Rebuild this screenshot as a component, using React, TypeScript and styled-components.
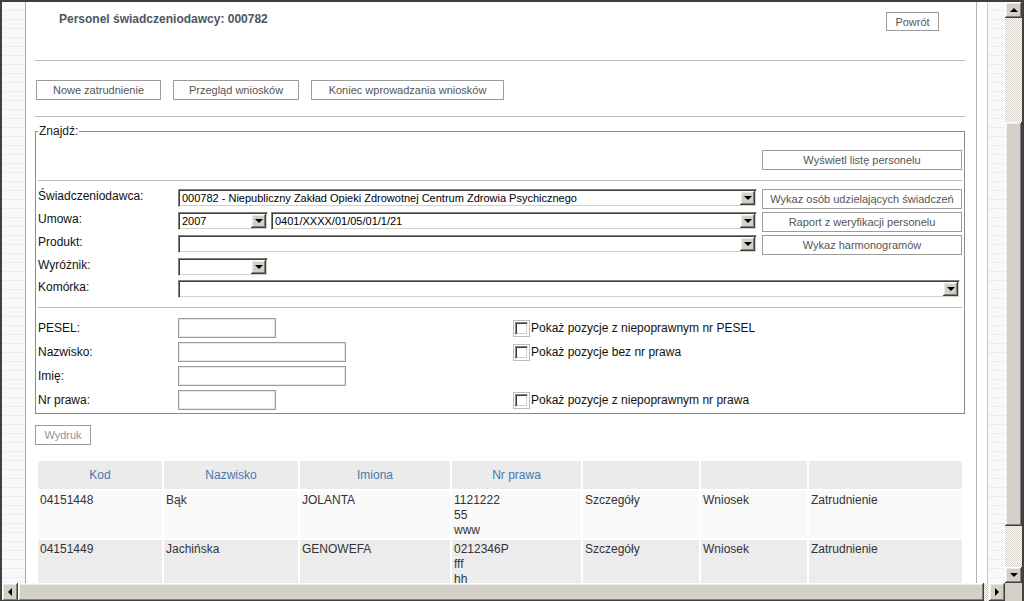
import styled, { createGlobalStyle, css } from "styled-components";

const GlobalStyle = createGlobalStyle`
  html, body {
    margin: 0;
    padding: 0;
    background: #fff;
    overflow: hidden;
  }
  body {
    font-family: "Liberation Sans", Arial, sans-serif;
    font-size: 12px;
    color: #222;
  }
  * {
    box-sizing: border-box;
  }
`;

const raised = css`
  background: #d4d0c8;
  box-shadow: inset -1px -1px 0 #404040, inset 1px 1px 0 #ffffff,
    inset -2px -2px 0 #808080, inset 2px 2px 0 #ecebe6;
`;

const checker = css`
  background-color: #ffffff;
  background-image: conic-gradient(#d4d0c8 25%, #ffffff 0 50%, #d4d0c8 0 75%, #ffffff 0);
  background-size: 2px 2px;
`;

const stripes = css`
  background: repeating-linear-gradient(to bottom, #f9f9fb 0 8px, #ececf1 8px 9px);
`;

const Frame = styled.div`
  width: 1024px;
  height: 601px;
  border-top: 2px solid #404040;
  border-left: 2px solid #404040;
  border-right: 2px solid #404040;
  display: flex;
  flex-direction: column;
  overflow: hidden;
`;

const Main = styled.div`
  display: flex;
  height: 581px;
`;

const LeftGutter = styled.div`
  width: 24px;
  border-right: 1px solid #a9a9a9;
  ${stripes};
`;

const Content = styled.div`
  width: 950px;
  padding: 10px 11px 0 9px;
  overflow: hidden;
  background: #fff;
`;

const RightGutter = styled.div`
  width: 29px;
  display: flex;
  border-left: 1px solid #b4b4b4;
`;

const GutterWhite = styled.div`
  width: 11px;
  border-right: 1px solid #c8c8c8;
  background: #fff;
`;

const GutterStripes = styled.div`
  flex: 1;
  ${stripes};
`;

const VScroll = styled.div`
  width: 17px;
  display: flex;
  flex-direction: column;
`;

const HScroll = styled.div`
  height: 18px;
  display: flex;
`;

const ScrollBtn = styled.div`
  width: 16px;
  height: 16px;
  flex: none;
  display: flex;
  align-items: center;
  justify-content: center;
  ${raised};
`;

const VScrollBtn = styled(ScrollBtn)`
  width: 17px;
`;

const HScrollBtn = styled(ScrollBtn)`
  height: 18px;
`;

const Track = styled.div<{ $size: number }>`
  flex: none;
  ${checker};
  ${({ $size }) => `flex-basis: ${$size}px;`}
`;

const Thumb = styled.div<{ $size: number }>`
  flex: none;
  ${raised};
  ${({ $size }) => `flex-basis: ${$size}px;`}
`;

const Corner = styled.div`
  width: 17px;
  background: #d4d0c8;
`;

type Dir = "up" | "down" | "left" | "right";

const Arrow = styled.span<{ $dir: Dir }>`
  width: 0;
  height: 0;
  border-style: solid;
  border-color: transparent;
  ${({ $dir }) =>
    $dir === "up"
      ? "border-width: 0 4px 4px 4px; border-bottom-color: #000;"
      : $dir === "down"
      ? "border-width: 4px 4px 0 4px; border-top-color: #000;"
      : $dir === "left"
      ? "border-width: 4px 4px 4px 0; border-right-color: #000;"
      : "border-width: 4px 0 4px 4px; border-left-color: #000;"}
`;

const Header = styled.div`
  display: flex;
  justify-content: space-between;
  align-items: flex-start;
  height: 19px;
  padding: 0 26px 0 24px;
`;

const Title = styled.h1`
  margin: 0;
  font-size: 12px;
  line-height: 14px;
  font-weight: bold;
  color: #4e5562;
`;

const Btn = styled.button<{ $w: number; $h?: number; $muted?: boolean }>`
  width: ${({ $w }) => $w}px;
  height: ${({ $h }) => $h ?? 20}px;
  flex: none;
  padding: 0;
  border: 1px solid #9c9c9c;
  background: #fff;
  color: ${({ $muted }) => ($muted ? "#939393" : "#555")};
  font: 11px "Liberation Sans", Arial, sans-serif;
  white-space: nowrap;
`;

const Rule = styled.div<{ $mt: number }>`
  height: 1px;
  margin-top: ${({ $mt }) => $mt}px;
  background: #bdbdbd;
`;

const ButtonBar = styled.div`
  display: flex;
  gap: 12px;
  margin-top: 19px;
  padding-left: 1px;
`;

const Fieldset = styled.fieldset`
  margin: 7px 0 0;
  padding: 0 2px 3px;
  border: 1px solid #8a8a8a;
  min-width: 0;
`;

const Legend = styled.legend`
  padding: 0 1px;
  font-size: 12px;
  line-height: 14px;
  color: #222;
`;

const TopActions = styled.div`
  display: flex;
  justify-content: flex-end;
  margin-top: 12px;
`;

const UpperGrid = styled.div`
  display: grid;
  grid-template-columns: 140px 584px 200px;
  grid-template-rows: 20px 20px 20px 19px 20px;
  row-gap: 3px;
  margin-top: 8px;
`;

const Label = styled.div`
  font-size: 12px;
  line-height: 14px;
  color: #111;
  white-space: nowrap;
`;

const LowerLabel = styled(Label)`
  align-self: center;
`;

const Pair = styled.div`
  display: flex;
  gap: 3px;
`;

const Wide = styled.div`
  grid-column: 2 / 4;
`;

const SelectBox = styled.div<{ $w: number }>`
  width: ${({ $w }) => $w}px;
  height: 18px;
  display: flex;
  align-items: center;
  background: #fff;
  border-style: solid;
  border-width: 1px;
  border-color: #808080 #ffffff #ffffff #808080;
  box-shadow: inset 1px 1px 0 #404040, inset -1px -1px 0 #d4d0c8;
`;

const SelectText = styled.span`
  flex: 1;
  padding-left: 3px;
  font-size: 11px;
  line-height: 14px;
  color: #000;
  white-space: nowrap;
  overflow: hidden;
`;

const SelectBtn = styled.span`
  width: 15px;
  height: 14px;
  margin-right: 1px;
  display: flex;
  align-items: center;
  justify-content: center;
  ${raised};
`;

const LowerGrid = styled.div`
  display: grid;
  grid-template-columns: 140px 335px 1fr;
  grid-auto-rows: 20px;
  row-gap: 4px;
  margin-top: 10px;
`;

const Input = styled.div<{ $w: number }>`
  width: ${({ $w }) => $w}px;
  height: 20px;
  border: 1px solid #9c9c9c;
  background: #fff;
  box-shadow: inset 1px 1px 0 #e6e6e6, inset -1px -1px 0 #e6e6e6;
`;

const Check = styled.label`
  display: flex;
  align-items: center;
  gap: 1px;
  font-size: 12px;
  line-height: 14px;
  color: #111;
`;

const CheckOuter = styled.span`
  width: 17px;
  height: 17px;
  border: 1px solid #bdbdbd;
  display: flex;
  align-items: center;
  justify-content: center;
`;

const CheckInner = styled.span`
  width: 13px;
  height: 13px;
  background: #fff;
  border-style: solid;
  border-width: 1px;
  border-color: #808080 #ffffff #ffffff #808080;
  box-shadow: inset 1px 1px 0 #404040, inset -1px -1px 0 #d4d0c8;
`;

const PrintBar = styled.div`
  margin-top: 11px;
`;

const Table = styled.table`
  margin: 14px 0 0 1px;
  width: 928px;
  table-layout: fixed;
  border-spacing: 2px;
  font-size: 12px;
`;

const Th = styled.th`
  height: 28px;
  padding: 0;
  background: #ebebeb;
  color: #4a76b0;
  font-weight: normal;
  text-align: center;
`;

const Tr = styled.tr<{ $alt: boolean }>`
  background: ${({ $alt }) => ($alt ? "#ececec" : "#f9f9f9")};
`;

const Td = styled.td`
  padding: 2px 2px 0;
  vertical-align: top;
  line-height: 15px;
  color: #333;
  white-space: nowrap;
  overflow: hidden;
`;

const columns = [124, 134, 150, 129, 116, 106, 153];
const headers = ["Kod", "Nazwisko", "Imiona", "Nr prawa", "", "", ""];

const people = [
  { kod: "04151448", nazwisko: "Bąk", imiona: "JOLANTA", prawo: ["1121222", "55", "www"] },
  { kod: "04151449", nazwisko: "Jachińska", imiona: "GENOWEFA", prawo: ["0212346P", "fff", "hh"] },
];

function Select({ w, value }: { w: number; value?: string }) {
  return (
    <SelectBox $w={w}>
      <SelectText>{value}</SelectText>
      <SelectBtn>
        <Arrow $dir="down" />
      </SelectBtn>
    </SelectBox>
  );
}

function CheckBox({ label }: { label: string }) {
  return (
    <Check>
      <CheckOuter>
        <CheckInner />
      </CheckOuter>
      {label}
    </Check>
  );
}

export default function App() {
  return (
    <>
      <GlobalStyle />
      <Frame>
        <Main>
          <LeftGutter />
          <Content>
            <Header>
              <Title>Personel świadczeniodawcy: 000782</Title>
              <Btn $w={53} $h={19}>Powrót</Btn>
            </Header>
            <Rule $mt={29} />
            <ButtonBar>
              <Btn $w={125}>Nowe zatrudnienie</Btn>
              <Btn $w={126}>Przegląd wniosków</Btn>
              <Btn $w={193}>Koniec wprowadzania wniosków</Btn>
            </ButtonBar>
            <Rule $mt={16} />

            <Fieldset>
              <Legend>Znajdź:</Legend>
              <TopActions>
                <Btn $w={200}>Wyświetl listę personelu</Btn>
              </TopActions>
              <Rule $mt={10} />
              <UpperGrid>
                <Label>Świadczeniodawca:</Label>
                <Select w={579} value="000782 - Niepubliczny Zakład Opieki Zdrowotnej Centrum Zdrowia Psychicznego" />
                <Btn $w={200}>Wykaz osób udzielających świadczeń</Btn>

                <Label>Umowa:</Label>
                <Pair>
                  <Select w={90} value="2007" />
                  <Select w={486} value="0401/XXXX/01/05/01/1/21" />
                </Pair>
                <Btn $w={200}>Raport z weryfikacji personelu</Btn>

                <Label>Produkt:</Label>
                <Select w={579} />
                <Btn $w={200}>Wykaz harmonogramów</Btn>

                <Label>Wyróżnik:</Label>
                <Wide>
                  <Select w={90} />
                </Wide>

                <Label>Komórka:</Label>
                <Wide>
                  <Select w={782} />
                </Wide>
              </UpperGrid>
              <Rule $mt={7} />
              <LowerGrid>
                <LowerLabel>PESEL:</LowerLabel>
                <Input $w={98} />
                <CheckBox label="Pokaż pozycje z niepoprawnym nr PESEL" />

                <LowerLabel>Nazwisko:</LowerLabel>
                <Input $w={168} />
                <CheckBox label="Pokaż pozycje bez nr prawa" />

                <LowerLabel>Imię:</LowerLabel>
                <Input $w={168} />
                <div />

                <LowerLabel>Nr prawa:</LowerLabel>
                <Input $w={98} />
                <CheckBox label="Pokaż pozycje z niepoprawnym nr prawa" />
              </LowerGrid>
            </Fieldset>

            <PrintBar>
              <Btn $w={56} $muted>Wydruk</Btn>
            </PrintBar>

            <Table>
              <colgroup>
                {columns.map((w, i) => (
                  <col key={i} style={{ width: w }} />
                ))}
              </colgroup>
              <thead>
                <tr>
                  {headers.map((h, i) => (
                    <Th key={i}>{h}</Th>
                  ))}
                </tr>
              </thead>
              <tbody>
                {people.map((p, i) => (
                  <Tr key={p.kod} $alt={i % 2 === 1}>
                    <Td>{p.kod}</Td>
                    <Td>{p.nazwisko}</Td>
                    <Td>{p.imiona}</Td>
                    <Td>
                      {p.prawo.map((line) => (
                        <div key={line}>{line}</div>
                      ))}
                    </Td>
                    <Td>Szczegóły</Td>
                    <Td>Wniosek</Td>
                    <Td>Zatrudnienie</Td>
                  </Tr>
                ))}
              </tbody>
            </Table>
          </Content>
          <RightGutter>
            <GutterWhite />
            <GutterStripes />
          </RightGutter>
          <VScroll>
            <VScrollBtn>
              <Arrow $dir="up" />
            </VScrollBtn>
            <Track $size={104} />
            <Thumb $size={404} />
            <Track $size={41} />
            <VScrollBtn>
              <Arrow $dir="down" />
            </VScrollBtn>
          </VScroll>
        </Main>
        <HScroll>
          <HScrollBtn>
            <Arrow $dir="left" />
          </HScrollBtn>
          <Thumb $size={966} />
          <Track $size={5} />
          <HScrollBtn>
            <Arrow $dir="right" />
          </HScrollBtn>
          <Corner />
        </HScroll>
      </Frame>
    </>
  );
}
